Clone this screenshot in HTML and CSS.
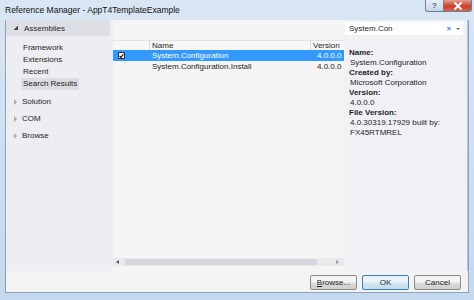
FILE: index.html
```html
<!DOCTYPE html>
<html lang="en">
<head>
  <meta charset="UTF-8" />
  <title>Reference Manager</title>
  <link rel="stylesheet" href="styles.css">
</head>
<body>
  <div class="window">
    <div class="titlebar">
      <span class="title">Reference Manager - AppT4TemplateExample</span>
      <div class="caption">
        <span class="cap-btn help">?</span>
        <span class="cap-btn close">
          <svg width="10" height="8" viewBox="0 0 10 8"><path d="M1.5 0.5 L8.5 7.5 M8.5 0.5 L1.5 7.5" stroke="#fff" stroke-width="2"/></svg>
        </span>
      </div>
    </div>

    <div class="client">
      <div class="main">
        <div class="left">
          <div class="group-head"><span class="tri open"></span>Assemblies</div>
          <ul class="subs">
            <li>Framework</li>
            <li>Extensions</li>
            <li>Recent</li>
            <li class="sel">Search Results</li>
          </ul>
          <div class="group"><span class="tri"></span>Solution</div>
          <div class="group"><span class="tri"></span>COM</div>
          <div class="group"><span class="tri"></span>Browse</div>
        </div>

        <div class="center">
          <div class="list">
            <div class="row head">
              <span class="c-check"></span>
              <span class="c-name">Name</span>
              <span class="c-ver">Version</span>
            </div>
            <div class="row selected">
              <span class="c-check"><span class="checkbox">
                <svg width="6" height="6" viewBox="0 0 6 6"><path d="M0.8 3 L2.4 4.8 L5.3 0.8" stroke="#1a1a1a" stroke-width="1.4" fill="none"/></svg>
              </span></span>
              <span class="c-name">System.Configuration</span>
              <span class="c-ver">4.0.0.0</span>
            </div>
            <div class="row">
              <span class="c-check"></span>
              <span class="c-name">System.Configuration.Install</span>
              <span class="c-ver">4.0.0.0</span>
            </div>
          </div>
          <div class="hscroll">
            <span class="arrow left-arrow"></span>
            <span class="thumb"></span>
            <span class="arrow right-arrow"></span>
          </div>
        </div>

        <div class="right">
          <div class="search">
            <span class="search-text">System.Con</span>
            <span class="clear">✕</span>
            <span class="drop"></span>
          </div>
          <div class="details">
            <div class="lbl">Name:</div>
            <div class="val">System.Configuration</div>
            <div class="lbl">Created by:</div>
            <div class="val">Microsoft Corporation</div>
            <div class="lbl">Version:</div>
            <div class="val">4.0.0.0</div>
            <div class="lbl">File Version:</div>
            <div class="val">4.0.30319.17929 built by:</div>
            <div class="val">FX45RTMREL</div>
          </div>
        </div>
      </div>

      <div class="footer">
        <button class="btn"><u>B</u>rowse...</button>
        <button class="btn default">OK</button>
        <button class="btn">Cancel</button>
      </div>
    </div>
  </div>
</body>
</html>
```

FILE: styles.css
```css
* { box-sizing: border-box; }
body { margin: 0; font-family: "Liberation Sans", Arial, sans-serif; font-size: 8px; color: #1e1e1e; background: #b9d1ea; }

.window { width: 474px; height: 300px; background: linear-gradient(#d9e6f4, #c4d8ee); padding: 0 5px 7px 5px; display: flex; flex-direction: column; }

.titlebar { height: 20px; display: flex; align-items: flex-start; }
.title { padding-top: 5px; font-size: 8.5px; color: #111; }
.caption { margin-left: auto; margin-right: -3px; display: flex; }
.cap-btn { height: 12px; display: flex; align-items: center; justify-content: center; border: 1px solid #6f7f92; border-top: none; }
.help { width: 19px; background: linear-gradient(#e8eef6, #c9d6e6); color: #4b5c70; font-size: 8px; font-weight: bold; border-radius: 0 0 0 3px; }
.close { width: 28px; background: linear-gradient(#e4a08f, #c7402c 55%, #d4654c); border-left: none; border-radius: 0 0 3px 0; }

.client { flex: 1; display: flex; flex-direction: column; background: #f4f3f4; border: 1px solid #8ca2bb; border-top: none; }

.main { flex: 1; display: flex; min-height: 0; }

.left { width: 107px; background: #eeedf2; }
.group-head { height: 16px; background: #dedee5; margin-right: 3px; display: flex; align-items: center; padding-left: 8px; color: #1e1e1e; }
.tri { width: 0; height: 0; margin-right: 5px; border-top: 3px solid transparent; border-bottom: 3px solid transparent; border-left: 3px solid #a8a8a8; }
.tri.open { border: none; width: 4px; height: 4px; background: linear-gradient(135deg, transparent 50%, #4a4a4a 50%); margin-right: 6px; }
.subs { list-style: none; margin: 6px 0 0 0; padding: 0 0 0 15px; }
.subs li { height: 12px; line-height: 12px; padding-left: 2px; }
.subs li.sel { background: #dcdce2; display: inline-block; padding-right: 2px; }
.group { height: 17px; display: flex; align-items: center; padding-left: 8px; }
.subs + .group { margin-top: 3px; }

.center { width: 231px; background: #f5f5f5; display: flex; flex-direction: column; padding-top: 20px; }
.list { flex: 1; }
.row { height: 11px; display: flex; align-items: center; white-space: nowrap; }
.row.head { height: 10px; border-top: 1px solid #e3e3e6; background: #f7f7f7; }
.row.head .c-name, .row.head .c-ver { border-left: 1px solid #dadada; height: 100%; display: flex; align-items: center; padding-left: 2px; }
.row.head .c-name { margin-left: -3px; }
.row.head .c-ver { margin-left: -4px; }
.row.selected { background: #3399ff; color: #fff; }
.c-check { width: 39px; display: flex; padding-left: 5px; }
.c-name { width: 165px; }
.c-ver { width: 27px; }
.checkbox { width: 7px; height: 7px; background: #fff; border: 1px solid #333; display: flex; align-items: center; justify-content: center; }

.hscroll { height: 8px; margin-bottom: 5px; display: flex; align-items: center; background: #e9e9ec; }
.arrow { width: 0; height: 0; border-top: 2.5px solid transparent; border-bottom: 2.5px solid transparent; }
.left-arrow { border-right: 3px solid #555; margin: 0 6px 0 3px; }
.right-arrow { border-left: 3px solid #999; margin: 0 5px 0 19px; }
.thumb { flex: 1; height: 6px; background: #d6d6dc; border-radius: 1px; }

.right { flex: 1; background: #f1f0f4; border-right: 1px solid #b8c3d2; padding-top: 2px; }
.search { height: 13px; margin: 0 4px 0 1px; background: #fff; display: flex; align-items: center; padding-left: 4px; }
.search-text { flex: 1; }
.clear { color: #3a6fc8; font-size: 7px; margin-right: 4px; }
.drop { width: 0; height: 0; border-left: 2px solid transparent; border-right: 2px solid transparent; border-top: 2px solid #666; margin-right: 3px; }
.details { padding: 13px 0 0 5px; line-height: 10px; }
.lbl { font-weight: bold; }
.val { padding-left: 1px; }

.footer { height: 21px; display: flex; justify-content: flex-end; align-items: flex-start; gap: 5px; padding: 4px 7px 0 0; }
.btn { width: 47px; height: 15px; padding: 0; font-family: inherit; font-size: 8px; color: #1e1e1e; border: 1px solid #8a8a8a; border-radius: 2px; background: linear-gradient(#f4f4f4 45%, #dcdcdc 55%, #cfcfcf); }
.btn.default { border-color: #3c7fb1; background: linear-gradient(#eaf4fa 45%, #d3e6f2 55%, #c3dcec); }
```
